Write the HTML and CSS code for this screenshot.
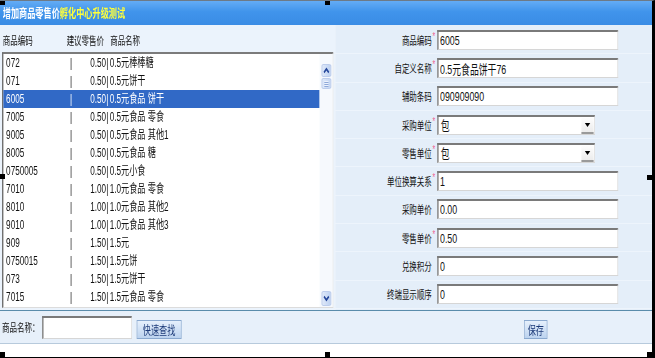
FILE: index.html
```html
<!doctype html>
<html>
<head>
	<meta charset="utf-8">
	<title>增加商品零售价</title>
	<link rel="stylesheet" href="styles.css">
</head>
<body>
<div class="shot">
	<div class="win">
		<div class="titlebar">增加商品零售价<span class="hl">孵化中心升级测试</span></div>
		<div class="main">
			<div class="left">
				<div class="list-head">
					<span class="c-code">商品编码</span>
					<span class="c-price">建议零售价</span>
					<span>商品名称</span>
				</div>
				<div class="listbox">
					<div class="rows">
						<div class="row"><span class="code">072</span><span class="bar">|</span><span class="price">0.50</span><span class="bar">|</span><span class="name">0.5元棒棒糖</span></div>
						<div class="row"><span class="code">071</span><span class="bar">|</span><span class="price">0.50</span><span class="bar">|</span><span class="name">0.5元饼干</span></div>
						<div class="row on"><span class="code">6005</span><span class="bar">|</span><span class="price">0.50</span><span class="bar">|</span><span class="name">0.5元食品 饼干</span></div>
						<div class="row"><span class="code">7005</span><span class="bar">|</span><span class="price">0.50</span><span class="bar">|</span><span class="name">0.5元食品 零食</span></div>
						<div class="row"><span class="code">9005</span><span class="bar">|</span><span class="price">0.50</span><span class="bar">|</span><span class="name">0.5元食品 其他1</span></div>
						<div class="row"><span class="code">8005</span><span class="bar">|</span><span class="price">0.50</span><span class="bar">|</span><span class="name">0.5元食品 糖</span></div>
						<div class="row"><span class="code">0750005</span><span class="bar">|</span><span class="price">0.50</span><span class="bar">|</span><span class="name">0.5元小食</span></div>
						<div class="row"><span class="code">7010</span><span class="bar">|</span><span class="price">1.00</span><span class="bar">|</span><span class="name">1.0元食品 零食</span></div>
						<div class="row"><span class="code">8010</span><span class="bar">|</span><span class="price">1.00</span><span class="bar">|</span><span class="name">1.0元食品 其他2</span></div>
						<div class="row"><span class="code">9010</span><span class="bar">|</span><span class="price">1.00</span><span class="bar">|</span><span class="name">1.0元食品 其他3</span></div>
						<div class="row"><span class="code">909</span><span class="bar">|</span><span class="price">1.50</span><span class="bar">|</span><span class="name">1.5元</span></div>
						<div class="row"><span class="code">0750015</span><span class="bar">|</span><span class="price">1.50</span><span class="bar">|</span><span class="name">1.5元饼</span></div>
						<div class="row"><span class="code">073</span><span class="bar">|</span><span class="price">1.50</span><span class="bar">|</span><span class="name">1.5元饼干</span></div>
						<div class="row"><span class="code">7015</span><span class="bar">|</span><span class="price">1.50</span><span class="bar">|</span><span class="name">1.5元食品 零食</span></div>
					</div>
					<div class="scrollbar">
						<span class="sb-btn"><svg width="10" height="7" viewBox="0 0 10 7"><path d="M1.5 5.5 L5 2 L8.5 5.5" fill="none" stroke="#24469a" stroke-width="2"/></svg></span>
						<span class="sb-thumb"></span>
						<span class="sb-fill"></span>
						<span class="sb-btn sb-down"><svg width="10" height="7" viewBox="0 0 10 7"><path d="M1.5 1.5 L5 5 L8.5 1.5" fill="none" stroke="#24469a" stroke-width="2"/></svg></span>
					</div>
				</div>
			</div>
			<div class="right">
				<div class="frow"><span class="lbl">商品编码</span><span class="req">*</span><input class="ipt" type="text" value="6005"></div>
				<div class="frow"><span class="lbl">自定义名称</span><span class="req">*</span><input class="ipt" type="text" value="0.5元食品饼干76"></div>
				<div class="frow"><span class="lbl">辅助条码</span><span class="req"></span><input class="ipt" type="text" value="090909090"></div>
				<div class="frow"><span class="lbl">采购单位</span><span class="req">*</span><div class="select"><span class="sel-text">包</span><span class="sel-arrow"></span></div></div>
				<div class="frow"><span class="lbl">零售单位</span><span class="req">*</span><div class="select"><span class="sel-text">包</span><span class="sel-arrow"></span></div></div>
				<div class="frow"><span class="lbl">单位换算关系</span><span class="req">*</span><input class="ipt" type="text" value="1"></div>
				<div class="frow"><span class="lbl">采购单价</span><span class="req"></span><input class="ipt" type="text" value="0.00"></div>
				<div class="frow"><span class="lbl">零售单价</span><span class="req">*</span><input class="ipt" type="text" value="0.50"></div>
				<div class="frow"><span class="lbl">兑换积分</span><span class="req"></span><input class="ipt" type="text" value="0"></div>
				<div class="frow"><span class="lbl">终端显示顺序</span><span class="req"></span><input class="ipt" type="text" value="0"></div>
			</div>
		</div>
		<div class="footer">
			<div class="find">
				<span class="find-lbl">商品名称：</span>
				<input class="ipt ipt-s" type="text" value="">
				<button class="btn" type="button">快速查找</button>
			</div>
			<div class="save">
				<button class="btn btn-s" type="button">保存</button>
			</div>
		</div>
	</div>
	<div class="tail"></div>

	<!-- resize handles -->
	<i class="handle h-tl"></i>
	<i class="handle h-tm"></i>
	<i class="handle h-ml"></i>
	<i class="handle h-mr"></i>
	<i class="handle h-bl"></i>
	<i class="handle h-bm"></i>
	<i class="handle h-br"></i>
</div>
</body>
</html>
```

FILE: styles.css
```css
body {
	margin: 0;
	background: #fff;
	font-family: "Liberation Sans", "Noto Sans CJK SC", sans-serif;
	font-size: 12px;
	color: #111;
}
.shot {
	position: relative;
	width: 652px;
	height: 356px;
	border-top: 1px solid #6d7a86;
	border-right: 3px solid #000;
	border-bottom: 1px solid #000;
	overflow: hidden;
}
/* the capture is squeezed sideways, so the window is drawn wide and scaled */
.win {
	width: 959px;
	transform: scaleX(.68);
	transform-origin: 0 0;
}
.titlebar {
	height: 24px;
	line-height: 24px;
	padding-left: 4px;
	background: linear-gradient(#64acf5, #4094eb 45%, #3a8ce5);
	color: #fff;
	font-weight: bold;
	font-family: "Noto Sans CJK SC", sans-serif;
	font-size: 12px;
}
.titlebar .hl {
	color: #ffff3a;
}
.main {
	display: flex;
	height: 285px;
}
.left {
	width: 493px;
	background: #ebf3fc;
}
.list-head {
	display: flex;
	height: 16px;
	padding: 8px 0 3px 4px;
	line-height: 16px;
	font-size: 11px;
}
.c-code {
	width: 94px;
}
.c-price {
	width: 64px;
}
.listbox {
	display: flex;
	margin-left: 3px;
	width: 487px;
	height: 256px;
	box-sizing: border-box;
	border-style: solid;
	border-width: 2px 1px 1px 2px;
	border-color: #7b7b7b #dcdcdc #dcdcdc #6b6b6b;
	background: #fff;
}
.rows {
	flex: 1;
}
.row {
	display: flex;
	height: 18px;
	line-height: 18px;
	padding-left: 4px;
	white-space: pre;
}
.row.on {
	background: #3169c6;
	color: #fff;
}
.code {
	width: 94px;
}
.price {
	width: 50px;
	text-align: right;
}
.name {
	padding-left: 2px;
}
.scrollbar {
	width: 19px;
	display: flex;
	flex-direction: column;
	align-items: center;
	padding: 10px 0 1px;
	box-sizing: border-box;
	background: #f6f9fd;
}
.sb-btn {
	display: flex;
	align-items: center;
	justify-content: center;
	width: 14px;
	height: 13px;
	box-sizing: border-box;
	border: 1px solid #b1c5e8;
	border-radius: 2px;
	background: linear-gradient(90deg, #dfe9f9, #bdd1f1);
}
.sb-down {
	height: 15px;
}
.sb-thumb {
	width: 14px;
	height: 11px;
	margin-top: 1px;
	box-sizing: border-box;
	border: 1px solid #b1c5e8;
	border-radius: 2px;
	background:
		repeating-linear-gradient(#eef3fc 0 1px, #8ea8d8 1px 2px) center / 6px 6px no-repeat,
		linear-gradient(90deg, #dfe9f9, #c3d5f2);
}
.sb-fill {
	flex: 1;
}
.right {
	flex: 1;
	padding-top: 1px;
	background: #e4eef9;
}
.frow {
	display: flex;
	align-items: center;
	height: 28.3px;
	box-sizing: border-box;
	border-bottom: 1px solid #edf4fc;
}
.lbl {
	width: 142px;
	text-align: right;
	font-size: 11px;
	color: #111;
}
.req {
	width: 8px;
	align-self: flex-start;
	padding: 6px 0 0 1px;
	box-sizing: border-box;
	line-height: 10px;
	font-size: 10px;
	color: #ee5a8e;
}
.ipt {
	width: 266px;
	height: 20px;
	margin: 0;
	padding: 0 0 0 2px;
	box-sizing: border-box;
	border-style: solid;
	border-width: 2px 1px 1px 2px;
	border-color: #7a7a7a #d6d6d6 #d6d6d6 #7a7a7a;
	background: #fff;
	outline: none;
	font: 13px "Liberation Sans", "Noto Sans CJK SC", sans-serif;
	color: #111;
}
.select {
	display: flex;
	width: 232px;
	height: 20px;
	box-sizing: border-box;
	border-style: solid;
	border-width: 2px 1px 1px 2px;
	border-color: #7a7a7a #d6d6d6 #d6d6d6 #7a7a7a;
	background: #fff;
	font-size: 13px;
	line-height: 17px;
}
.sel-text {
	flex: 1;
	padding-left: 3px;
}
.sel-arrow {
	display: flex;
	align-items: center;
	justify-content: center;
	width: 18px;
	margin: 1px 1px 0 0;
	border-bottom: 2px solid #9a9a9a;
	background: linear-gradient(#fdfdfd, #ececec);
}
.sel-arrow::after {
	content: "";
	border-top: 4px solid #000;
	border-left: 4px solid transparent;
	border-right: 4px solid transparent;
}
.footer {
	display: flex;
	height: 34px;
	box-sizing: border-box;
	border-top: 1px solid #5a8cab;
	border-bottom: 1px solid #b7cadc;
	background: #e7f0fa;
}
.find {
	display: flex;
	align-items: center;
	width: 493px;
	padding-left: 3px;
	box-sizing: border-box;
}
.find-lbl {
	margin-right: 4px;
	font-size: 11px;
}
.ipt-s {
	width: 132px;
	height: 23px;
}
.btn {
	height: 19px;
	margin: 4px 0 0 7px;
	padding: 0 8px;
	border: 1px solid #8aa9cf;
	background: linear-gradient(#e6f0fc, #bcd3ef);
	color: #1c3a78;
	font: 12px "Noto Sans CJK SC", sans-serif;
	line-height: 17px;
}
.save {
	display: flex;
	align-items: center;
	justify-content: center;
	width: 266px;
	padding-left: 162px;
}
.btn-s {
	margin-left: 0;
	padding: 0 4px;
}
.tail {
	height: 12px;
	background: #fff;
}
.handle {
	position: absolute;
	width: 5px;
	height: 5px;
	background: #000;
}
.h-tl { left: 0; top: -1px; }
.h-tm { left: 325px; top: -1px; }
.h-ml { left: 0; top: 173px; }
.h-mr { right: 0; top: 174px; }
.h-bl { left: 0; bottom: 0; }
.h-bm { left: 325px; bottom: 0; }
.h-br { right: 0; bottom: 0; }
```
